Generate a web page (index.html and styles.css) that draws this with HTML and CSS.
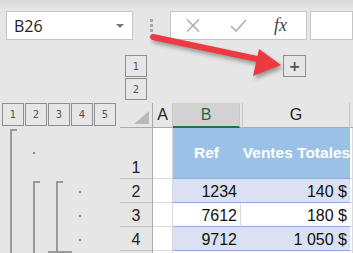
FILE: index.html
```html
<!DOCTYPE html>
<html lang="fr">
<head>
    <meta charset="UTF-8">
    <meta name="viewport" content="width=device-width, initial-scale=1.0">
    <title>Plan - regrouper</title>
    <link rel="stylesheet" href="styles.css">
</head>
<body>
    <div class="app">
        <!-- barre de formule -->
        <div class="toolbar">
            <div class="name-box">
                <span>B26</span>
                <span class="caret"></span>
            </div>
            <div class="grip"><i></i><i></i><i></i></div>
            <div class="formula-tools">
                <svg class="icon-cancel" width="14" height="13" viewBox="0 0 14 13">
                    <path d="M1 0.5 L13 12.5 M13 0.5 L1 12.5" />
                </svg>
                <svg class="icon-ok" width="17" height="14" viewBox="0 0 17 14">
                    <path d="M1 7 L6 12 L16 1" />
                </svg>
                <span class="fx">fx</span>
            </div>
            <div class="formula-input"></div>
        </div>

        <!-- niveaux du plan (lignes) -->
        <div class="row-outline">
            <div class="row-levels">
                <div class="level">1</div>
                <div class="level">2</div>
            </div>
            <div class="level plus">+</div>
        </div>

        <!-- feuille -->
        <div class="sheet">
            <div class="col-levels">
                <div class="level">1</div>
                <div class="level">2</div>
                <div class="level">3</div>
                <div class="level">4</div>
                <div class="level">5</div>
            </div>
            <div class="corner"><span class="select-all"></span></div>
            <div class="col-hdr">A</div>
            <div class="col-hdr selected">B</div>
            <div class="col-hdr hidden-cols"></div>
            <div class="col-hdr">G</div>
            <div class="col-hdr last"></div>

            <div class="outline-bars">
                <svg width="120" height="125" viewBox="0 0 120 125">
                    <path d="M17 2 H11 V125" />
                    <path d="M40 54 H34 V125" />
                    <path d="M63 54 H57 V124" />
                    <path d="M48 124 H72" />
                    <rect x="33" y="24" width="2" height="2" />
                    <rect x="79" y="63" width="2" height="2" />
                    <rect x="79" y="87" width="2" height="2" />
                    <rect x="79" y="111" width="2" height="2" />
                </svg>
            </div>

            <div class="row-hdr">1</div>
            <div class="cell"></div>
            <div class="cell head">Ref</div>
            <div class="cell head gap"></div>
            <div class="cell head">Ventes Totales</div>
            <div class="cell"></div>

            <div class="row-hdr">2</div>
            <div class="cell"></div>
            <div class="cell num band">1234</div>
            <div class="cell band gap"></div>
            <div class="cell num band">140 $</div>
            <div class="cell"></div>

            <div class="row-hdr">3</div>
            <div class="cell"></div>
            <div class="cell num plain">7612</div>
            <div class="cell plain gap split"></div>
            <div class="cell num plain">180 $</div>
            <div class="cell"></div>

            <div class="row-hdr">4</div>
            <div class="cell"></div>
            <div class="cell num band">9712</div>
            <div class="cell band gap"></div>
            <div class="cell num band">1 050 $</div>
            <div class="cell"></div>

            <div class="row-hdr"></div>
            <div class="cell"></div>
            <div class="cell plain"></div>
            <div class="cell plain gap"></div>
            <div class="cell plain"></div>
            <div class="cell"></div>
        </div>

        <!-- flèche d'annotation -->
        <svg class="arrow" width="353" height="253" viewBox="0 0 353 253">
            <path class="arrow-line" d="M153 37 L262 60" />
            <polygon points="281,65 259,49 253,76" />
        </svg>
    </div>
</body>
</html>
```

FILE: styles.css
```css
body {
    margin: 0;
    padding: 0;
    background-color: #e6e6e6;
    font-family: 'Liberation Sans', Arial, sans-serif;
    overflow: hidden;
}

.app {
    position: relative;
    width: 353px;
    height: 253px;
    overflow: hidden;
    background-color: #e6e6e6;
}

/* barre de formule */
.toolbar {
    display: flex;
    align-items: flex-start;
    height: 44px;
    padding-top: 11px;
    box-sizing: border-box;
    background: linear-gradient(#d6d6d6, #e6e6e6 9px);
}

.name-box {
    display: flex;
    align-items: center;
    justify-content: space-between;
    width: 127px;
    height: 29px;
    margin-left: 6px;
    padding: 0 8px 0 7px;
    box-sizing: border-box;
    background-color: #fff;
    border: 1px solid #c6c6c6;
    font-family: 'Open Sans', sans-serif;
    font-size: 16px;
    color: #222;
}

.caret {
    width: 0;
    height: 0;
    border-left: 4px solid transparent;
    border-right: 4px solid transparent;
    border-top: 4px solid #777;
}

.grip {
    display: flex;
    flex-direction: column;
    gap: 2px;
    margin: 8px 0 0 17px;
}

.grip i {
    display: block;
    width: 3px;
    height: 3px;
    background-color: #a8a8a8;
}

.formula-tools {
    display: flex;
    align-items: center;
    width: 137px;
    height: 29px;
    margin-left: 17px;
    padding-left: 15px;
    box-sizing: border-box;
    background-color: #fff;
    border: 1px solid #c6c6c6;
}

.formula-tools svg {
    fill: none;
    stroke: #b0b0b0;
    stroke-width: 1.6;
}

.icon-ok {
    margin-left: 30px;
    stroke-width: 2.2;
}

.fx {
    margin-left: 27px;
    font-family: 'Liberation Serif', serif;
    font-style: italic;
    font-size: 18px;
    color: #444;
}

.formula-input {
    flex: 1;
    height: 29px;
    margin-left: 3px;
    box-sizing: border-box;
    background-color: #fff;
    border: 1px solid #c6c6c6;
}

/* boutons de niveaux */
.level {
    display: flex;
    align-items: center;
    justify-content: center;
    width: 22px;
    height: 22px;
    box-sizing: border-box;
    border: 1px solid #8e8e8e;
    font-family: 'DejaVu Sans', sans-serif;
    font-size: 10px;
    color: #555;
}

.row-outline {
    display: flex;
    margin-top: 11px;
}

.row-levels {
    display: flex;
    flex-direction: column;
    gap: 1px;
    margin-left: 125px;
}

.plus {
    width: 23px;
    margin-left: 136px;
    font-size: 14px;
    font-weight: bold;
    color: #555;
}

/* feuille */
.sheet {
    display: grid;
    grid-template-columns: 120px 33px 20px 67px 3px 107px 1fr;
    grid-template-rows: 25px 51px 24px 24px 24px 24px;
    margin-top: 3px;
}

.col-levels {
    display: flex;
    gap: 1px;
    padding-left: 2px;
}

.col-levels .level {
    height: 23px;
}

.corner {
    display: flex;
    align-items: flex-end;
    justify-content: flex-end;
    padding: 0 3px 3px 0;
    border-right: 1px solid #ababab;
    border-bottom: 1px solid #ababab;
}

.select-all {
    width: 15px;
    height: 13px;
    background-color: #b9b9b9;
    clip-path: polygon(100% 0, 100% 100%, 0 100%);
}

.col-hdr {
    display: flex;
    align-items: center;
    justify-content: center;
    font-size: 16px;
    color: #222;
    border-right: 1px solid #c8c8c8;
    border-bottom: 1px solid #ababab;
    box-sizing: border-box;
}

.col-hdr.selected {
    background-color: #d2d2d2;
    border-bottom: 2px solid #217346;
    color: #1f6b42;
}

.col-hdr.hidden-cols {
    border-right: 1px solid #c8c8c8;
}

.col-hdr.last {
    border-right: none;
}

.outline-bars {
    grid-row: 2 / span 5;
}

.outline-bars svg {
    display: block;
}

.outline-bars path {
    fill: none;
    stroke: #9a9a9a;
    stroke-width: 2;
}

.outline-bars rect {
    fill: #8c8c8c;
}

.row-hdr {
    display: flex;
    align-items: flex-end;
    justify-content: center;
    font-size: 16px;
    line-height: 20px;
    color: #222;
    border-right: 1px solid #ababab;
    border-bottom: 1px solid #c4c4c4;
}

.cell {
    display: flex;
    align-items: flex-end;
    background-color: #fff;
    border-right: 1px solid #dadada;
    border-bottom: 1px solid #dadada;
    font-size: 16px;
    line-height: 20px;
    color: #111;
    white-space: nowrap;
}

.cell.head {
    align-items: center;
    justify-content: center;
    background-color: #9bc2e6;
    border-right: none;
    border-bottom: 1px solid #8ea9db;
    font-weight: bold;
    font-size: 15.5px;
    color: #fff;
}

.cell.band {
    background-color: #d9e1f2;
    border-right: none;
    border-bottom: 1px solid #8ea9db;
}

.cell.plain {
    border-right: none;
    border-bottom: 1px solid #8ea9db;
}

.cell.split {
    border-left: 1px solid #dadada;
    box-sizing: border-box;
}

.cell.num {
    justify-content: flex-end;
    padding-right: 3px;
}

/* flèche */
.arrow {
    position: absolute;
    top: 0;
    left: 0;
    pointer-events: none;
    filter: drop-shadow(2px 3px 2px rgba(0, 0, 0, 0.35));
}

.arrow-line {
    stroke: #ec3a40;
    stroke-width: 6;
    stroke-linecap: round;
}

.arrow polygon {
    fill: #ec3a40;
}
```
